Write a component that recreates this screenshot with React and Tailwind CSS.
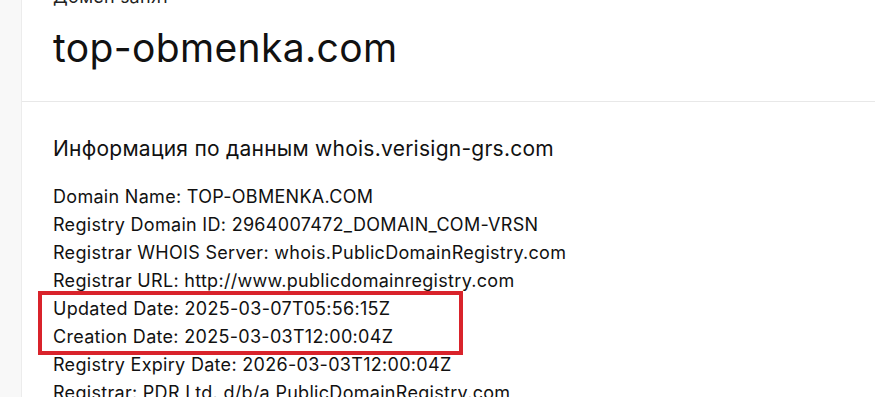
export default function App() {
  const lines = [
    "Domain Name: TOP-OBMENKA.COM",
    "Registry Domain ID: 2964007472_DOMAIN_COM-VRSN",
    "Registrar WHOIS Server: whois.PublicDomainRegistry.com",
    "Registrar URL: http://www.publicdomainregistry.com",
  ];
  const boxed = [
    "Updated Date: 2025-03-07T05:56:15Z",
    "Creation Date: 2025-03-03T12:00:04Z",
  ];
  const after = [
    "Registry Expiry Date: 2026-03-03T12:00:04Z",
    "Registrar: PDR Ltd. d/b/a PublicDomainRegistry.com",
  ];
  return (
    <div className="flex w-[875px] h-[397px] overflow-hidden bg-white text-[#111]" style={{ fontFamily: "Inter, 'Noto Sans', sans-serif" }}>
      <div className="w-[22px] shrink-0 bg-[#f8f8f8] border-r border-[#ececec]" />
      <div className="flex-1 flex flex-col">
        <div className="border-b border-[#e8e8e8] pl-[31px] h-[102px] shrink-0">
          <div className="text-[18px] leading-[20px] mt-[-13px] text-[#222] tracking-[0.3px]">Домен занят</div>
          <div className="text-[39px] leading-[46px] mt-[18px] tracking-[0.35px]">top-obmenka.com</div>
        </div>
        <div className="pl-[31px] pt-[33px]">
          <div className="text-[21px] leading-[28px] tracking-[0.25px]">Информация по данным whois.verisign-grs.com</div>
          <div className="mt-[20px] text-[18px] leading-[28px] tracking-[0.3px]">
            {lines.map((l) => <div key={l}>{l}</div>)}
            <div className="relative">
              {boxed.map((l) => <div key={l}>{l}</div>)}
              <div className="absolute top-[-4px] bottom-[-4px] left-[-15px] w-[425px] border-[4px] border-[#d9232b]" />
            </div>
            {after.map((l) => <div key={l} className="whitespace-nowrap">{l}</div>)}
          </div>
        </div>
      </div>
    </div>
  );
}
